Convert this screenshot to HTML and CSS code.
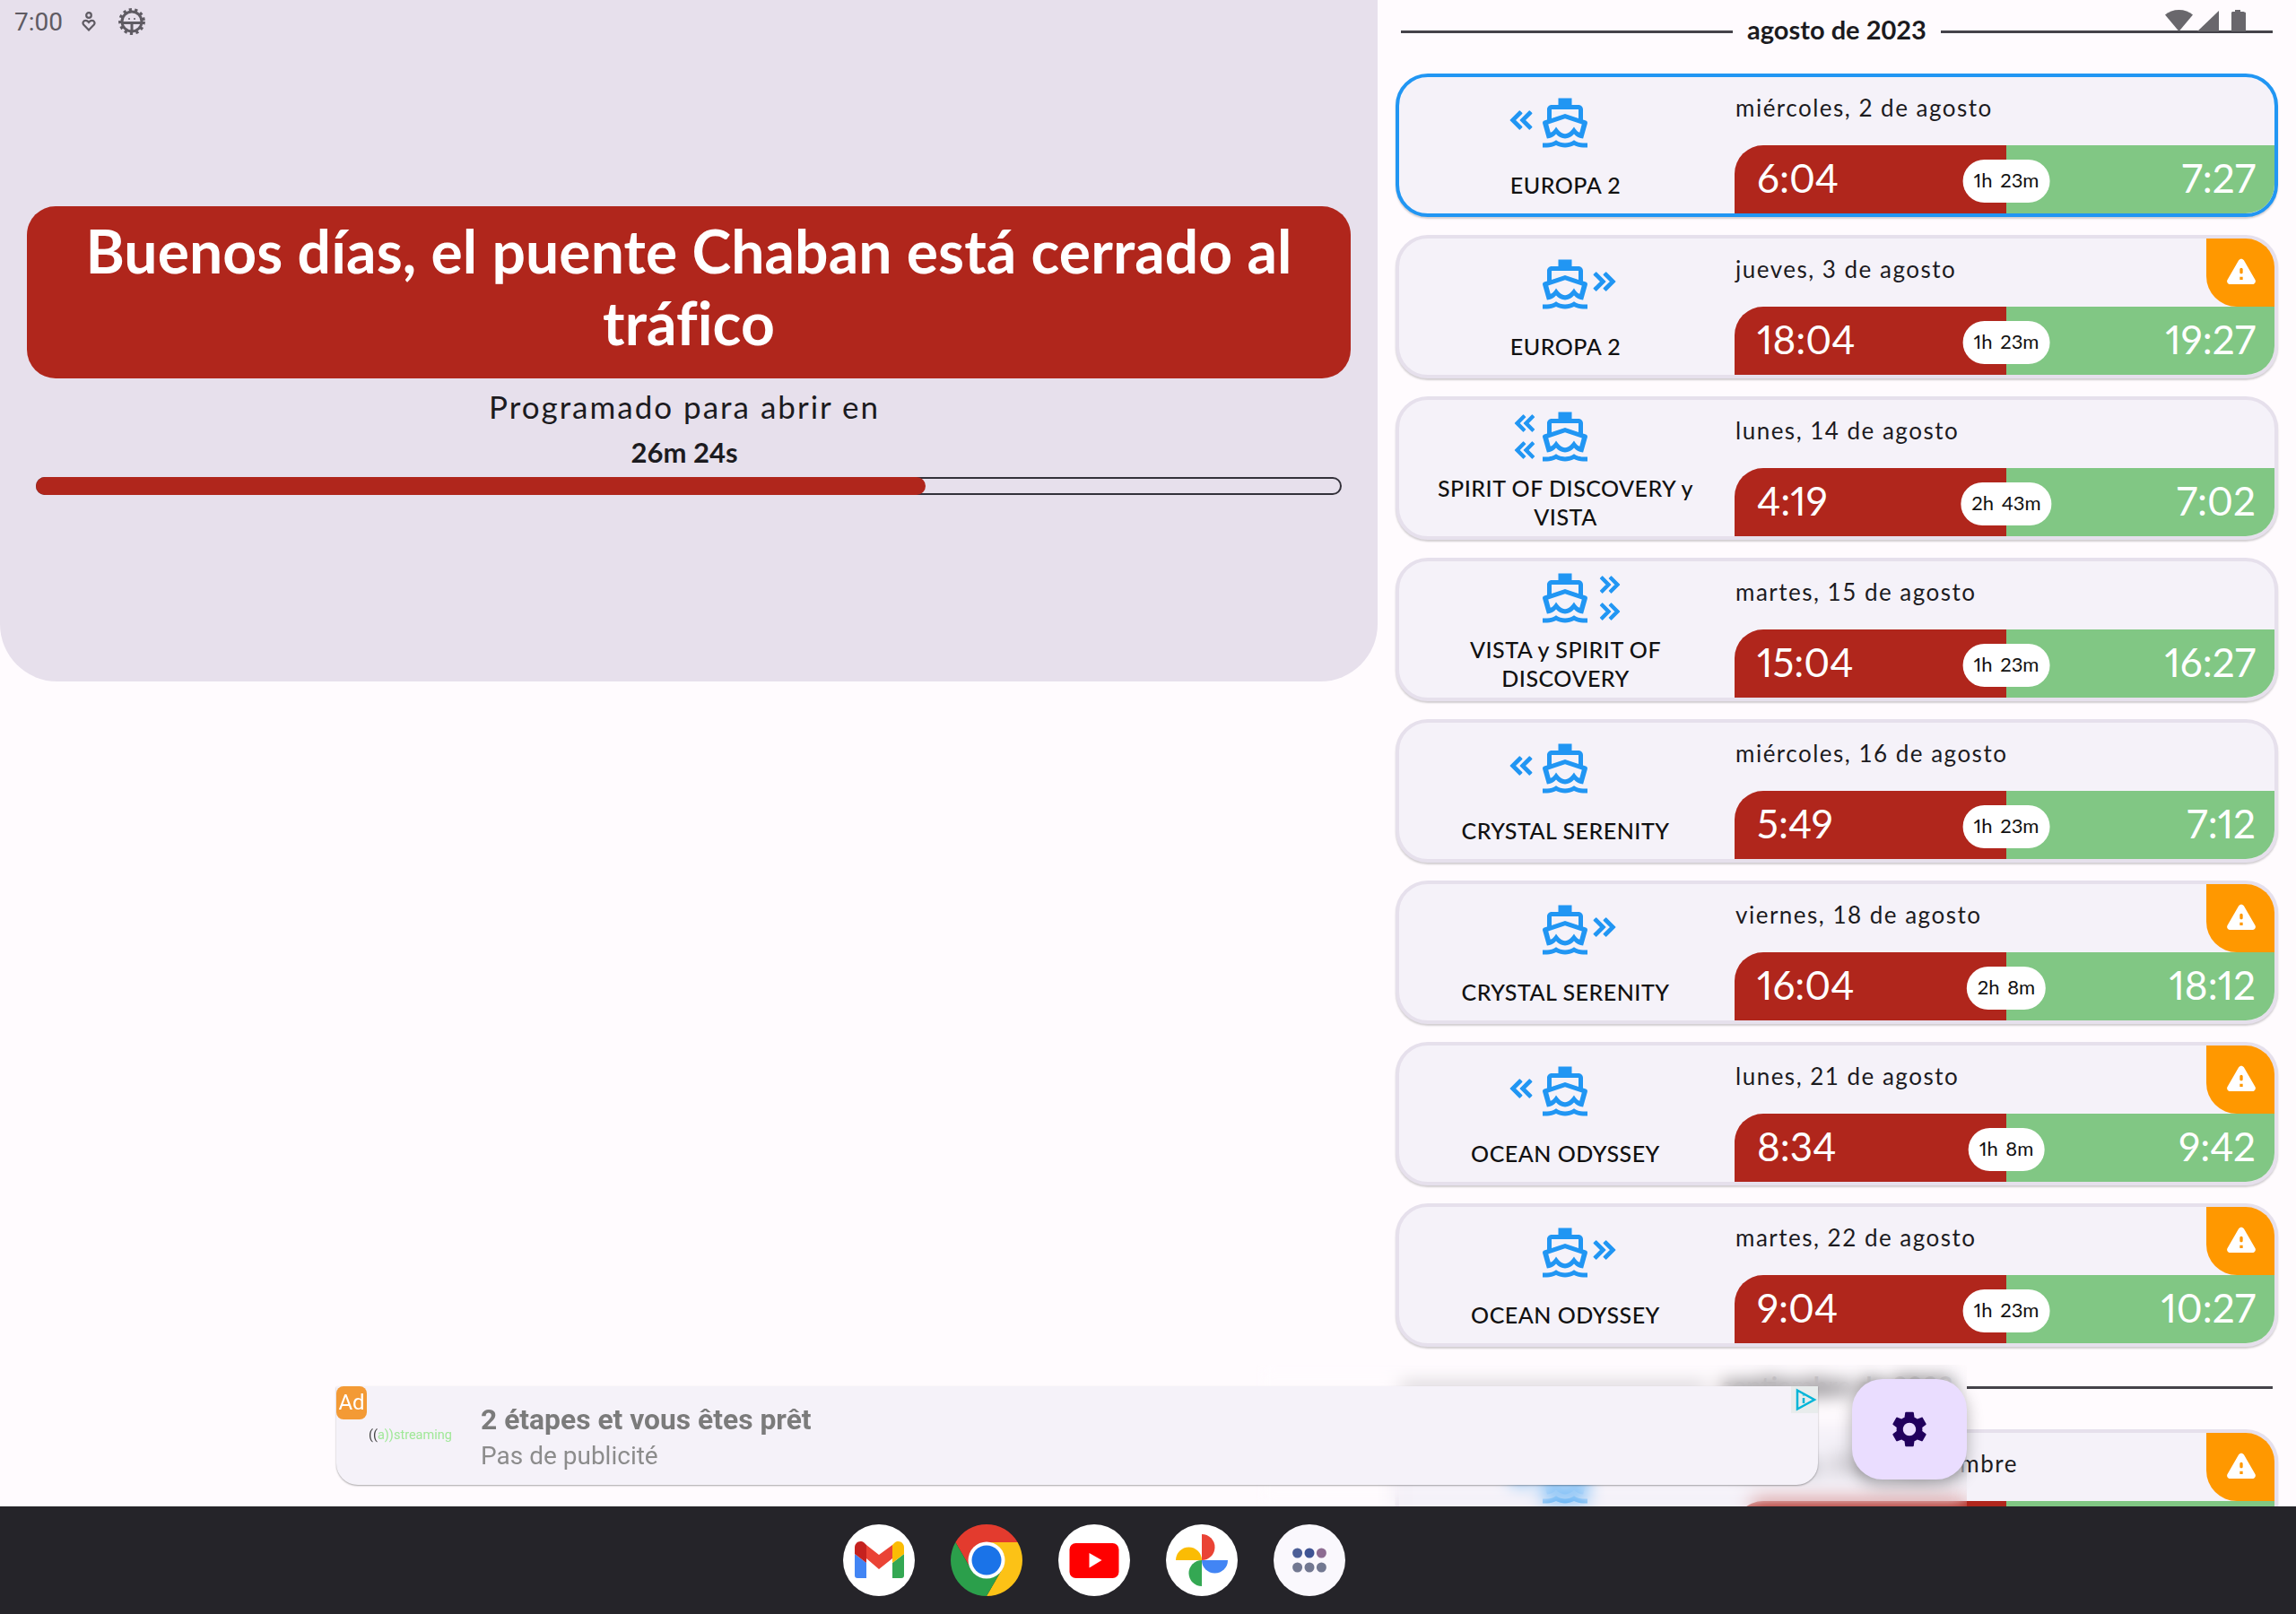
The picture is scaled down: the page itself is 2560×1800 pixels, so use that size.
FILE: index.html
```html
<!DOCTYPE html>
<html lang="es">
<head>
<meta charset="utf-8">
<title>Puente Chaban</title>
<link rel="stylesheet" href="styles.css">
</head>
<body>
<svg class="defs" width="0" height="0" aria-hidden="true">
  <symbol id="ferry" viewBox="0 0 24 24"><path fill-rule="evenodd" d="M20 21c-1.39 0-2.78-.47-4-1.32-2.44 1.71-5.56 1.71-8 0C6.78 20.53 5.39 21 4 21H2v2h2c1.38 0 2.74-.35 4-.99 2.52 1.29 5.48 1.29 8 0 1.26.65 2.62.99 4 .99h2v-2h-2zM3.95 19H4c1.6 0 3.02-.88 4-2 .98 1.12 2.4 2 4 2s3.02-.88 4-2c.98 1.12 2.4 2 4 2h.05l1.89-6.68c.08-.26.06-.54-.06-.78s-.34-.42-.6-.5L20 10.62V6c0-1.1-.9-2-2-2h-3V1H9v3H6c-1.1 0-2 .9-2 2v4.62l-1.29.42c-.26.08-.48.26-.6.5s-.15.52-.06.78L3.95 19zM6 6h12v3.97L12 8 6 9.97V6zM12 10.1l7.5 2.5-1 3.7c-1-.3-1.7-1.3-2.5-2.5-1 1.4-2.4 3.1-4 3.1s-3-1.7-4-3.1c-.8 1.2-1.5 2.2-2.5 2.5l-1-3.7z"/></symbol>
  <symbol id="chev-left" viewBox="0 0 24 24"><path d="M17.59 18L19 16.59 14.42 12 19 7.41 17.59 6l-6 6zM11 18l1.41-1.41L7.83 12l4.58-4.59L11 6l-6 6z"/></symbol>
  <symbol id="chev-right" viewBox="0 0 24 24"><path d="M6.41 6L5 7.41 9.58 12 5 16.59 6.41 18l6-6zM13 6l-1.41 1.41L16.17 12l-4.58 4.59L13 18l6-6z"/></symbol>
  <symbol id="warn" viewBox="0 0 24 24"><path d="M4.47 21h15.06c1.54 0 2.5-1.67 1.73-3L13.73 4.99c-.77-1.33-2.69-1.33-3.46 0L2.74 18c-.77 1.33.19 3 1.73 3zM12 14c-.55 0-1-.45-1-1v-2c0-.55.45-1 1-1s1 .45 1 1v2c0 .55-.45 1-1 1zm1 4h-2v-2h2v2z"/></symbol>
</svg>

<div class="screen">
  <main class="main">
    <section class="status-panel">
      <div class="statusbar">
        <span class="clock">7:00</span>
        <svg class="ic-person" viewBox="0 0 16 22"><circle cx="8" cy="4" r="2.8"/><path d="M8 20.5L2.2 14.6C.6 12.6 2 9.8 4.5 9.8 6 9.8 7.2 10.7 8 11.8 8.8 10.7 10 9.8 11.5 9.8 14 9.8 15.4 12.6 13.8 14.6z"/></svg>
        <svg class="ic-debug" viewBox="0 0 30 30"><circle class="teeth" cx="15" cy="15" r="13.2"/><circle cx="15" cy="15" r="11"/><path d="M4 16.5h22M15 16.5V26"/><circle class="dot" cx="12" cy="12" r="1"/><circle class="dot" cx="18" cy="12" r="1"/></svg>
      </div>
      <h1 class="banner">Buenos días, el puente Chaban está cerrado al tráfico</h1>
      <div class="countdown">
        <p class="countdown-label">Programado para abrir en</p>
        <p class="countdown-value">26m 24s</p>
      </div>
      <div class="progress"><div class="progress-fill" style="width:68.3%"></div></div>
    </section>

    <section class="schedule">
      <div class="month"><span>agosto de 2023</span></div>
      <div class="cards">

        <article class="card card-active">
          <div class="info">
            <div class="ship"><svg class="chev chev-l"><use href="#chev-left"/></svg><svg class="boat"><use href="#ferry"/></svg></div>
            <p class="name">EUROPA 2</p>
          </div>
          <div class="slot">
            <div class="date">miércoles, 2 de agosto</div>
            <div class="bar"><span class="from">6:04</span><span class="to">7:27</span><span class="pill">1h 23m</span></div>
          </div>
        </article>

        <article class="card">
          <div class="info">
            <div class="ship"><svg class="boat"><use href="#ferry"/></svg><svg class="chev chev-r"><use href="#chev-right"/></svg></div>
            <p class="name">EUROPA 2</p>
          </div>
          <div class="slot">
            <div class="date">jueves, 3 de agosto<span class="alert"><svg><use href="#warn"/></svg></span></div>
            <div class="bar"><span class="from">18:04</span><span class="to">19:27</span><span class="pill">1h 23m</span></div>
          </div>
        </article>

        <article class="card">
          <div class="info info-tall">
            <div class="ship"><svg class="chev chev-sl1"><use href="#chev-left"/></svg><svg class="chev chev-sl2"><use href="#chev-left"/></svg><svg class="boat"><use href="#ferry"/></svg></div>
            <p class="name">SPIRIT OF DISCOVERY y VISTA</p>
          </div>
          <div class="slot">
            <div class="date">lunes, 14 de agosto</div>
            <div class="bar"><span class="from">4:19</span><span class="to">7:02</span><span class="pill">2h 43m</span></div>
          </div>
        </article>

        <article class="card">
          <div class="info info-tall">
            <div class="ship"><svg class="boat"><use href="#ferry"/></svg><svg class="chev chev-sr1"><use href="#chev-right"/></svg><svg class="chev chev-sr2"><use href="#chev-right"/></svg></div>
            <p class="name">VISTA y SPIRIT OF DISCOVERY</p>
          </div>
          <div class="slot">
            <div class="date">martes, 15 de agosto</div>
            <div class="bar"><span class="from">15:04</span><span class="to">16:27</span><span class="pill">1h 23m</span></div>
          </div>
        </article>

        <article class="card">
          <div class="info">
            <div class="ship"><svg class="chev chev-l"><use href="#chev-left"/></svg><svg class="boat"><use href="#ferry"/></svg></div>
            <p class="name">CRYSTAL SERENITY</p>
          </div>
          <div class="slot">
            <div class="date">miércoles, 16 de agosto</div>
            <div class="bar"><span class="from">5:49</span><span class="to">7:12</span><span class="pill">1h 23m</span></div>
          </div>
        </article>

        <article class="card">
          <div class="info">
            <div class="ship"><svg class="boat"><use href="#ferry"/></svg><svg class="chev chev-r"><use href="#chev-right"/></svg></div>
            <p class="name">CRYSTAL SERENITY</p>
          </div>
          <div class="slot">
            <div class="date">viernes, 18 de agosto<span class="alert"><svg><use href="#warn"/></svg></span></div>
            <div class="bar"><span class="from">16:04</span><span class="to">18:12</span><span class="pill">2h 8m</span></div>
          </div>
        </article>

        <article class="card">
          <div class="info">
            <div class="ship"><svg class="chev chev-l"><use href="#chev-left"/></svg><svg class="boat"><use href="#ferry"/></svg></div>
            <p class="name">OCEAN ODYSSEY</p>
          </div>
          <div class="slot">
            <div class="date">lunes, 21 de agosto<span class="alert"><svg><use href="#warn"/></svg></span></div>
            <div class="bar"><span class="from">8:34</span><span class="to">9:42</span><span class="pill">1h 8m</span></div>
          </div>
        </article>

        <article class="card">
          <div class="info">
            <div class="ship"><svg class="boat"><use href="#ferry"/></svg><svg class="chev chev-r"><use href="#chev-right"/></svg></div>
            <p class="name">OCEAN ODYSSEY</p>
          </div>
          <div class="slot">
            <div class="date">martes, 22 de agosto<span class="alert"><svg><use href="#warn"/></svg></span></div>
            <div class="bar"><span class="from">9:04</span><span class="to">10:27</span><span class="pill">1h 23m</span></div>
          </div>
        </article>
      </div>

      <div class="month month-next"><span>septiembre de 2023</span></div>
      <div class="cards">
        <article class="card">
          <div class="info">
            <div class="ship"><svg class="chev chev-l"><use href="#chev-left"/></svg><svg class="boat"><use href="#ferry"/></svg></div>
            <p class="name">EUROPA 2</p>
          </div>
          <div class="slot">
            <div class="date">viernes, 1 de septiembre<span class="alert"><svg><use href="#warn"/></svg></span></div>
            <div class="bar"><span class="from">5:04</span><span class="to">6:27</span><span class="pill">1h 23m</span></div>
          </div>
        </article>
      </div>
    </section>

    <svg class="sys-icons" viewBox="0 0 90 24"><path d="M0 5.500C4 2 9.500 0 15.500 0S27 2 31 5.500L15.500 24z"/><path d="M36 24L60 1V24z"/><path d="M74 24V3.500C74 2.500 74.800 2 75.500 2H78V0H84V2H86.500C87.300 2 90 2.500 90 3.500V24z"/></svg>

    <div class="backdrop-blur"></div>

    <aside class="ad">
      <span class="ad-badge">Ad</span>
      <span class="ad-logo"><b>((</b><i>a))streaming</i></span>
      <div class="ad-copy">
        <p class="ad-title">2 étapes et vous êtes prêt</p>
        <p class="ad-sub">Pas de publicité</p>
      </div>
      <span class="ad-choices"><svg viewBox="0 0 30 30"><path d="M7 4.500V25.500L26 15 7 4.500z"/><path class="ad-i" d="M14 13v6M14 9.500v1"/></svg></span>
    </aside>

    <button class="fab" type="button" aria-label="Ajustes">
      <svg viewBox="0 0 24 24"><path d="M19.140 12.940c.04-.3.06-.61.06-.94 0-.32-.02-.64-.07-.94l2.030-1.580c.18-.14.23-.41.12-.61l-1.920-3.320c-.12-.22-.37-.29-.59-.22l-2.390.96c-.5-.38-1.030-.7-1.620-.94l-.36-2.540c-.04-.24-.24-.41-.48-.41h-3.840c-.24 0-.43.17-.47.41l-.36 2.540c-.59.24-1.130.57-1.620.94l-2.390-.96c-.22-.08-.47 0-.59.22L2.740 8.870c-.12.21-.08.47.12.61l2.030 1.580c-.05.3-.09.63-.09.94s.02.64.07.94l-2.030 1.580c-.18.14-.23.41-.12.61l1.920 3.320c.12.22.37.29.59.22l2.390-.96c.5.38 1.030.7 1.620.94l.36 2.540c.05.24.24.41.48.41h3.840c.24 0 .44-.17.47-.41l.36-2.540c.59-.24 1.130-.56 1.620-.94l2.390.96c.22.08.47 0 .59-.22l1.920-3.320c.12-.22.07-.47-.12-.61l-2.010-1.580zM12 15.600c-1.980 0-3.600-1.620-3.600-3.600s1.620-3.600 3.600-3.600 3.600 1.620 3.600 3.600-1.620 3.600-3.600 3.600z"/></svg>
    </button>
  </main>

  <nav class="dock">
    <svg class="dock-icon" viewBox="0 0 80 80"><circle cx="40" cy="40" r="40" fill="#fff"/><path fill="#4285f4" d="M13 33l13 10v17H16a3 3 0 0 1-3-3z"/><path fill="#34a853" d="M68 33L55 43v17h10a3 3 0 0 0 3-3z"/><path fill="#ea4335" d="M26 23l14 11 15-11v15L40 50 26 38z"/><path fill="#c5221f" d="M13 26c0-6 6-9 10.500-5.500L26 23v20L13 33z"/><path fill="#fbbc04" d="M68 26c0-6-6-9-10.500-5.500L55 23v20l13-10z"/></svg>
    <svg class="dock-icon" viewBox="0 0 80 80"><path fill="#e33b2e" d="M40 20h34.640A40 40 0 0 0 5.360 20L22.680 50A20 20 0 0 1 40 20z"/><path fill="#fcc216" d="M74.640 20H40a20 20 0 0 1 17.320 30L40 80a40 40 0 0 0 34.640-60z"/><path fill="#2b9f4b" d="M5.360 20A40 40 0 0 0 40 80l17.320-30a20 20 0 0 1-34.640 0z"/><circle cx="40" cy="40" r="20.500" fill="#fff"/><circle cx="40" cy="40" r="16.500" fill="#1a73e8"/></svg>
    <svg class="dock-icon" viewBox="0 0 80 80"><circle cx="40" cy="40" r="40" fill="#fff"/><rect x="12.500" y="21" width="55" height="39" rx="7" fill="#f00"/><path fill="#fff" d="M34.500 32l14 8-14 8.500z"/></svg>
    <svg class="dock-icon" viewBox="0 0 80 80"><circle cx="40" cy="40" r="40" fill="#fff"/><path fill="#ea4335" d="M40 11a14.500 14.500 0 0 1 0 29z"/><path fill="#4285f4" d="M40 40h29a14.500 14.500 0 0 1-29 0z"/><path fill="#34a853" d="M40 69a14.500 14.500 0 0 1 0-29z"/><path fill="#fbbc04" d="M11 40a14.500 14.500 0 0 1 29 0z"/></svg>
    <svg class="dock-icon" viewBox="0 0 80 80"><circle cx="40" cy="40" r="40" fill="#faf8fd"/><circle cx="26.600" cy="32" r="5.500" fill="#4c5f97"/><circle cx="40" cy="32" r="5.500" fill="#3f5494"/><circle cx="53.400" cy="32" r="5.500" fill="#8d6c92"/><circle cx="26.600" cy="48" r="5.500" fill="#727891"/><circle cx="40" cy="48" r="5.500" fill="#727891"/><circle cx="53.400" cy="48" r="5.500" fill="#727891"/></svg>
  </nav>
</div>
</body>
</html>
```
FILE: styles.css
```css
* { box-sizing: border-box; }
html, body { margin: 0; padding: 0; }
body { background: #fffbfe; font-family: "Lato", "Liberation Sans", sans-serif; color: #1c1b1f; }
p, h1 { margin: 0; }
.defs { position: absolute; }

.screen { width: 2560px; height: 1800px; display: flex; flex-direction: column; overflow: hidden; }
.main { position: relative; flex: 0 0 1680px; display: flex; align-items: flex-start; overflow: hidden; }

/* left panel */
.status-panel { flex: 0 0 1536px; height: 760px; background: #e7e0ec; border-radius: 0 0 64px 64px; padding: 0 40px 0 30px; }
.statusbar { height: 48px; display: flex; align-items: center; color: #5f5b63; margin-left: -21px; }
.clock { font: 400 28px/48px "Roboto", sans-serif; width: 61px; text-align: right; margin-right: 21px; padding-top: 2px; flex: none; }
.ic-person { width: 16px; height: 22px; fill: none; stroke: #5f5b63; stroke-width: 2.2; flex: none; margin-right: 25px; }
.ic-debug { width: 30px; height: 30px; fill: none; stroke: #5f5b63; stroke-width: 3; flex: none; }
.ic-debug .teeth { stroke-width: 3.4; stroke-dasharray: 3.200 3.300; }
.ic-debug .dot { fill: #5f5b63; stroke: none; }

.banner { margin: 182px -10px 0 0; height: 192px; background: #b0261c; color: #fff; border-radius: 32px; padding: 10px 30px 0; text-align: center; font-size: 66px; line-height: 80px; font-weight: 700; letter-spacing: .1px; }
.countdown { text-align: center; margin-top: 6px; }
.countdown-label { font-size: 35px; line-height: 50px; font-weight: 400; letter-spacing: 2px; }
.countdown-value { font-size: 31px; line-height: 44px; font-weight: 700; margin-top: 4px; }
.progress { margin: 6px 0 0 10px; width: 1456px; height: 20px; border: 2px solid #33313a; border-radius: 10px; position: relative; }
.progress-fill { position: absolute; left: -2px; top: -2px; height: 20px; background: #b0261c; border-radius: 10px; }

/* schedule */
.schedule { flex: 0 0 1024px; padding: 0 20px; }
.month { height: 70px; margin: 0 6px 12px; display: flex; align-items: center; gap: 16px; font-size: 29px; font-weight: 700; white-space: nowrap; }
.month::before, .month::after { content: ""; flex: 1; height: 3px; background: #45434a; }
.month span { padding: 0 0 5px; }
.month-next { margin-top: 10px; }
.cards { display: flex; flex-direction: column; gap: 20px; }

.card { height: 160px; display: flex; background: #f5f2f9; border: 4px solid #e6e0ec; border-radius: 36px; overflow: hidden; box-shadow: 0 2px 2px rgba(0,0,0,.18); }
.card-active { border-color: #2196f3; }

.info { flex: 0 0 374px; display: flex; flex-direction: column; align-items: center; padding-top: 21px; gap: 23px; }
.info-tall { padding-top: 11px; gap: 11px; }
.ship { position: relative; width: 60px; height: 60px; flex: none; fill: #2196f3; margin-left: -4px; }
.boat { width: 60px; height: 60px; display: block; }
.chev { position: absolute; stroke: #2196f3; stroke-width: .9; stroke-linejoin: round; overflow: visible; }
.chev-l, .chev-r { width: 40px; height: 40px; top: 7px; }
.chev-l { left: -39px; }
.chev-r { left: 54px; }
.chev-sl1, .chev-sl2, .chev-sr1, .chev-sr2 { width: 36px; height: 36px; }
.chev-sl1, .chev-sl2 { left: -33px; }
.chev-sr1, .chev-sr2 { left: 62px; }
.chev-sl1, .chev-sr1 { top: -3px; }
.chev-sl2, .chev-sr2 { top: 27px; }
.name { font-size: 25px; line-height: 32px; font-weight: 500; text-align: center; color: #111; padding: 0 36px; letter-spacing: .5px; margin-left: -3px; }

.slot { flex: 1; display: flex; flex-direction: column; }
.date { position: relative; height: 76px; padding: 0 0 8px 1px; display: flex; align-items: center; font-size: 26px; letter-spacing: 1.5px; }
.alert { position: absolute; right: 0; top: 0; width: 76px; height: 76px; background: #ff9800; border-radius: 0 0 0 34px; display: flex; align-items: center; justify-content: center; padding: 0 0 4px 2px; }
.alert svg { width: 40px; height: 40px; fill: #fff; }
.bar { position: relative; height: 76px; display: flex; color: #fff; font-size: 44px; line-height: 72px; font-variant-numeric: proportional-nums; }
.from { flex: 0 0 303px; background: #b0261c; border-radius: 32px 0 0 0; padding-left: 25px; }
.to { flex: 1; background: #81c784; text-align: right; padding-right: 21px; }
.pill { position: absolute; left: 303px; top: 16px; transform: translateX(-50%); height: 48px; padding: 0 12px; border-radius: 24px; background: #fff; color: #111; font-size: 22px; word-spacing: 3px; line-height: 46px; white-space: nowrap; }

/* overlays */
.sys-icons { position: absolute; left: 2414px; top: 11px; width: 90px; height: 24px; fill: #69676c; }
.backdrop-blur { position: absolute; left: 1400px; top: 1522px; width: 793px; height: 158px; backdrop-filter: blur(10px); }
.ad { position: absolute; left: 375px; top: 1546px; width: 1652px; height: 110px; background: #f5f2f9; border-radius: 0 0 24px 24px; box-shadow: 0 1px 2px rgba(0,0,0,.35); font-family: "Roboto", sans-serif; }
.ad-badge { position: absolute; left: 0; top: 0; width: 34px; height: 37px; background: #f39a35; color: #fff; border-radius: 8px; font-size: 24px; line-height: 37px; text-align: center; }
.ad-logo { position: absolute; left: 36px; top: 46px; font-size: 14.500px; line-height: 18px; color: #a0e898; white-space: nowrap; }
.ad-logo b { color: #444; font-weight: 400; }
.ad-logo i { font-style: normal; }
.ad-copy { position: absolute; left: 161px; top: 17px; }
.ad-title { font-size: 31.800px; line-height: 40px; font-weight: 700; color: #7b7b7b; }
.ad-sub { font-size: 28px; line-height: 38px; color: #8c8c8c; margin-top: 2px; }
.ad-choices { position: absolute; right: 0; top: 0; width: 30px; height: 30px; background: #e8ecec; }
.ad-choices svg { width: 30px; height: 30px; fill: none; stroke: #00b5d8; stroke-width: 2.500; display: block; }
.fab { position: absolute; left: 2065px; top: 1538px; width: 128px; height: 112px; border: 0; padding: 0; background: #eaddff; border-radius: 34px; box-shadow: 0 6px 18px rgba(0,0,0,.3); display: flex; align-items: center; justify-content: center; }
.fab svg { width: 48px; height: 48px; fill: #21005d; }

/* dock */
.dock { flex: 0 0 120px; background: #252429; display: flex; align-items: center; justify-content: center; gap: 40px; padding-right: 120px; }
.dock-icon { width: 80px; height: 80px; flex: none; }
```
